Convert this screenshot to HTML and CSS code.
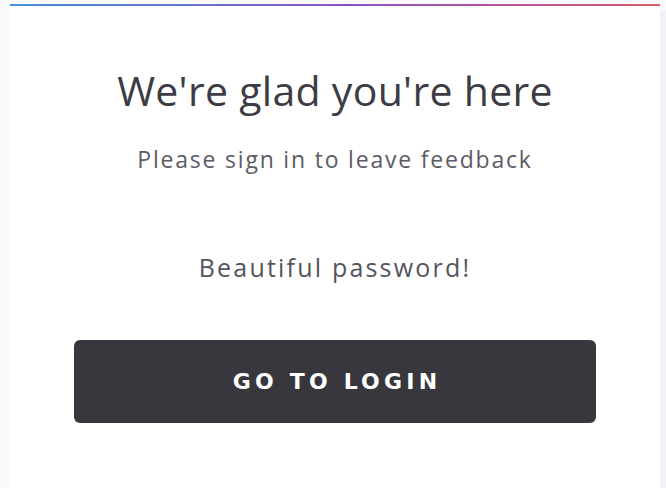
FILE: index.html
```html
<!DOCTYPE html>
<html>
<head>
<meta charset="utf-8">
<link rel="stylesheet" href="styles.css">
</head>
<body>
<div class="page">
  <div class="card">
    <div class="accent"></div>
    <div class="content">
      <h1 class="title">We're glad you're here</h1>
      <p class="subtitle">Please sign in to leave feedback</p>
      <p class="message">Beautiful password!</p>
      <button class="btn">GO TO LOGIN</button>
    </div>
  </div>
  <div class="strip"></div>
</div>
</body>
</html>
```

FILE: styles.css
```css
html, body {
  margin: 0;
  padding: 0;
  height: 100%;
}
body {
  background: #fafafc;
  font-family: "Open Sans", "Lato", sans-serif;
  overflow: hidden;
}
.page {
  display: flex;
  height: 488px;
  padding: 4px 0 0 10px;
  box-sizing: border-box;
}
.card {
  width: 650px;
  background: #ffffff;
  display: flex;
  flex-direction: column;
}
.strip {
  width: 6px;
  background: #f3f2f7;
  margin-top: 6px;
}
.accent {
  height: 2px;
  background: linear-gradient(90deg, #4a90d9 0%, #6a72cc 30%, #8b52bf 52%, #b255a0 75%, #d65f68 100%);
}
.content {
  display: flex;
  flex-direction: column;
  align-items: center;
  padding: 0 64px;
}
.title {
  margin: 60px 0 0;
  font-size: 41px;
  line-height: 48px;
  font-weight: 400;
  letter-spacing: 0.3px;
  color: #3d3c45;
}
.subtitle {
  margin: 30px 0 0;
  font-size: 23px;
  line-height: 30px;
  letter-spacing: 1.8px;
  color: #5c5b64;
}
.message {
  margin: 76px 0 0;
  font-size: 25px;
  line-height: 34px;
  letter-spacing: 2.2px;
  color: #55545d;
}
.btn {
  margin-top: 56px;
  width: 522px;
  height: 83px;
  border: none;
  border-radius: 6px;
  background: #38373d;
  color: #ffffff;
  font-family: "DejaVu Sans", sans-serif;
  font-weight: 700;
  font-size: 22px;
  letter-spacing: 4.2px;
  padding: 0 0 0 4px;
}
```
